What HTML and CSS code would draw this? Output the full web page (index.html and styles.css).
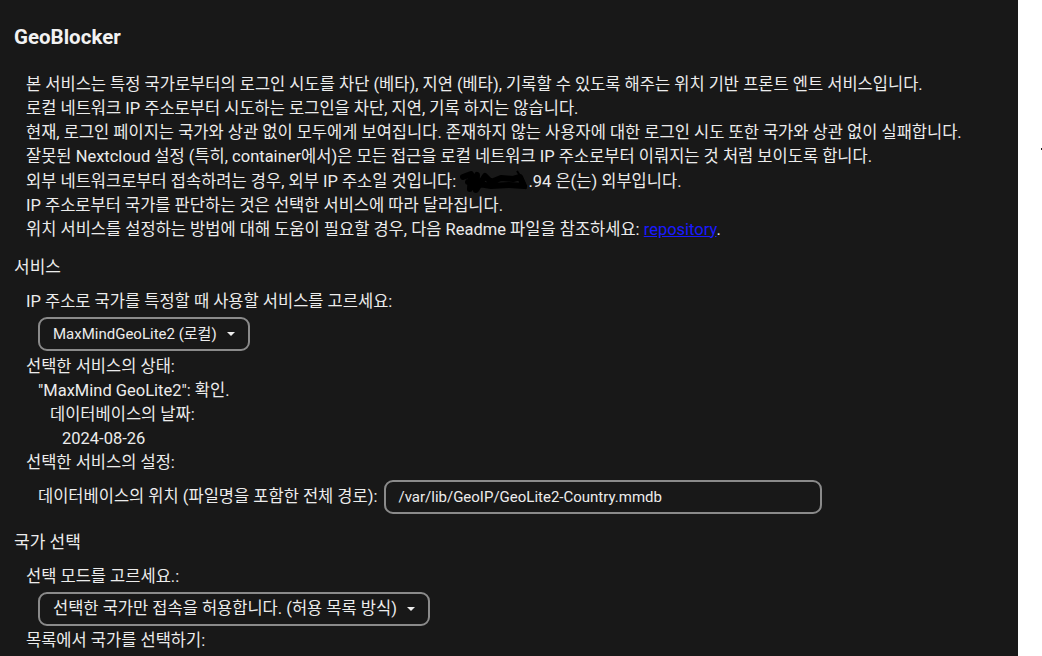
FILE: index.html
```html
<!DOCTYPE html>
<html lang="ko">
<head>
    <meta charset="UTF-8">
    <meta name="viewport" content="width=device-width, initial-scale=1.0">
    <title>GeoBlocker</title>
    <link rel="stylesheet" href="styles.css">
</head>
<body>
    <div class="panel">
        <h2 class="title">GeoBlocker</h2>
        <div class="intro">
            <div>본 서비스는 특정 국가로부터의 로그인 시도를 차단 (베타), 지연 (베타), 기록할 수 있도록 해주는 위치 기반 프론트 엔트 서비스입니다.</div>
            <div>로컬 네트워크 IP 주소로부터 시도하는 로그인을 차단, 지연, 기록 하지는 않습니다.</div>
            <div>현재, 로그인 페이지는 국가와 상관 없이 모두에게 보여집니다. 존재하지 않는 사용자에 대한 로그인 시도 또한 국가와 상관 없이 실패합니다.</div>
            <div>잘못된 Nextcloud 설정 (특히, container에서)은 모든 접근을 로컬 네트워크 IP 주소로부터 이뤄지는 것 처럼 보이도록 합니다.</div>
            <div>외부 네트워크로부터 접속하려는 경우, 외부 IP 주소일 것입니다: <span class="redacted"><svg width="68" height="24" viewBox="0 0 68 24"><path d="M3 8 L11 5 L10 20 L17 6 L16 21 L25 7 L31 13 L41 9 L53 10 L60 8 L64 17 L49 16 L31 17 L19 15 L8 13" fill="none" stroke="#000" stroke-width="6" stroke-linejoin="round" stroke-linecap="round"/><path d="M57 2 L64 13 L66 20" fill="none" stroke="#000" stroke-width="2"/></svg></span>.94 은(는) 외부입니다.</div>
            <div>IP 주소로부터 국가를 판단하는 것은 선택한 서비스에 따라 달라집니다.</div>
            <div>위치 서비스를 설정하는 방법에 대해 도움이 필요할 경우, 다음 Readme 파일을 참조하세요: <a href="#" class="link">repository</a>.</div>
        </div>

        <h3 class="section">서비스</h3>
        <div class="block">
            <div class="label">IP 주소로 국가를 특정할 때 사용할 서비스를 고르세요:</div>
            <div class="select select-service">MaxMindGeoLite2 (로컬)<span class="caret"></span></div>
            <div class="row">선택한 서비스의 상태:</div>
            <div class="row lvl2">"MaxMind GeoLite2": 확인.</div>
            <div class="row lvl3">데이터베이스의 날짜:</div>
            <div class="row lvl4">2024-08-26</div>
            <div class="row">선택한 서비스의 설정:</div>
            <div class="field lvl2">
                <span>데이터베이스의 위치 (파일명을 포함한 전체 경로):</span>
                <div class="input">/var/lib/GeoIP/GeoLite2-Country.mmdb</div>
            </div>
        </div>

        <h3 class="section section-country">국가 선택</h3>
        <div class="block">
            <div class="label">선택 모드를 고르세요.:</div>
            <div class="select select-mode">선택한 국가만 접속을 허용합니다. (허용 목록 방식)<span class="caret"></span></div>
            <div class="row">목록에서 국가를 선택하기:</div>
        </div>
    </div>
    <div class="side"><span class="dot"></span></div>
</body>
</html>
```
FILE: styles.css
```css
body {
    margin: 0;
    display: flex;
    min-height: 100vh;
    background: #fff;
    font-family: Roboto, "Noto Sans CJK KR", sans-serif;
    font-size: 16.5px;
    color: #ececec;
}

.panel {
    width: 1018px;
    background: #181818;
    padding: 25px 0 0 14px;
    box-sizing: border-box;
    overflow: hidden;
    height: 656px;
}

.side {
    flex: 1;
    position: relative;
}

.dot {
    position: absolute;
    left: 23px;
    top: 148px;
    width: 2px;
    height: 2px;
    background: #222;
}

.title {
    margin: 0;
    font-size: 20.5px;
    font-weight: bold;
    line-height: 24px;
    color: #f2f2f2;
}

.intro {
    margin-top: 24px;
    padding-left: 12px;
    line-height: 24px;
    white-space: nowrap;
}

.redacted {
    display: inline-block;
    width: 68px;
    height: 24px;
    vertical-align: -6px;
}

.link {
    color: #1a1aff;
}

.section {
    margin: 13px 0 0 0;
    font-size: 17px;
    font-weight: normal;
    line-height: 24px;
}

.section-country {
    margin-top: 16px;
}

.block {
    padding-left: 12px;
    margin-top: 11px;
    line-height: 24px;
}

.label {
    line-height: 24px;
}

.select {
    display: inline-flex;
    align-items: center;
    height: 34px;
    box-sizing: border-box;
    margin: 3px 0 4px 12px;
    padding: 0 13px 0 13px;
    border: 2px solid #8a8a8a;
    border-radius: 9px;
}

.select-service {
    font-size: 15px;
}

.caret {
    width: 0;
    height: 0;
    margin-left: 10px;
    border-left: 4px solid transparent;
    border-right: 4px solid transparent;
    border-top: 4px solid #ececec;
}

.select-mode {
    margin-bottom: 3px;
}

.row {
    line-height: 24px;
}

.lvl2 { padding-left: 12px; }
.lvl3 { padding-left: 24px; }
.lvl4 { padding-left: 36px; }

.field {
    display: flex;
    align-items: center;
    gap: 7px;
    margin-top: 5px;
}

.input {
    width: 438px;
    height: 34px;
    box-sizing: border-box;
    display: flex;
    align-items: center;
    padding-left: 12px;
    border: 2px solid #8a8a8a;
    border-radius: 9px;
    font-size: 15px;
}
```
